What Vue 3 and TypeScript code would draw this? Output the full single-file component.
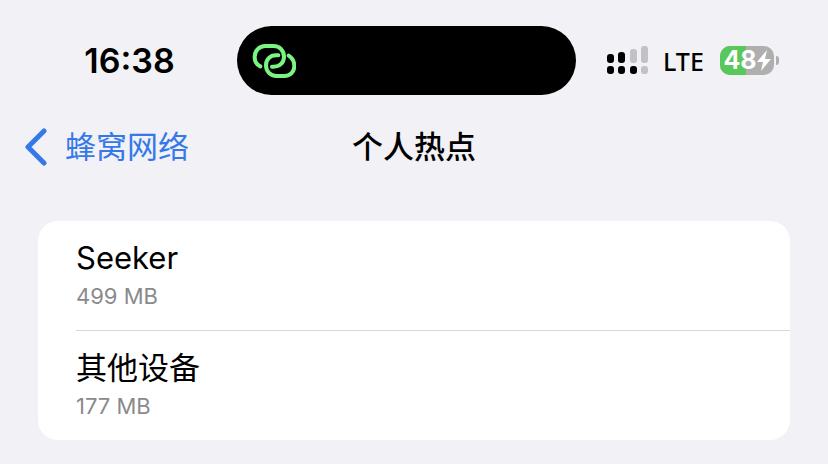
<script setup lang="ts">
interface Device {
  name: string
  usage: string
}

const time = '16:38'
const network = 'LTE'
const battery = 48
const devices: Device[] = [
  { name: 'Seeker', usage: '499 MB' },
  { name: '其他设备', usage: '177 MB' },
]
</script>

<template>
  <div class="screen">
    <div class="status">
      <time class="clock">{{ time }}</time>
      <div class="island">
        <svg class="link" viewBox="0 0 132 108" aria-hidden="true">
          <path d="M25 70C14 65 8 54 8 42C8 23 22 9 40 9H65C83 9 96 23 96 41C96 59 83 71 65 71H60" />
          <path d="M79 37H72C54 37 42 50 42 67C42 85 55 99 73 99H97C115 99 127 86 127 69C127 56 121 45 110 38" />
        </svg>
      </div>
      <div class="indicators">
        <svg class="signal" viewBox="0 1 42 29" aria-hidden="true">
          <rect x="0" y="9" width="7" height="9" rx="3" />
          <rect x="11" y="7" width="7" height="11" rx="3" />
          <rect class="off" x="23" y="4" width="7" height="14" rx="3" />
          <rect class="off" x="34" y="1" width="7" height="17" rx="3" />
          <rect x="0" y="21" width="7" height="8" rx="3" />
          <rect x="11" y="21" width="7" height="8" rx="3" />
          <rect x="23" y="21" width="7" height="8" rx="3" />
          <rect class="off" x="34" y="21" width="7" height="8" rx="3" />
        </svg>
        <span class="network">{{ network }}</span>
        <div class="battery">
          <div class="cell">
            <div class="charge" :style="{ width: battery + '%' }"></div>
            <div class="level">
              <span>{{ battery }}</span>
              <svg class="bolt" viewBox="0 0 14 21" aria-hidden="true">
                <path d="M10 0L0 12H6L4 21L14 9H8Z" />
              </svg>
            </div>
          </div>
          <div class="cap"></div>
        </div>
      </div>
    </div>

    <header class="nav">
      <a class="back" href="#">
        <svg class="chevron" viewBox="0 0 24 38" aria-hidden="true">
          <path d="M20 3L4 19L20 35" />
        </svg>
        <span>蜂窝网络</span>
      </a>
      <h1>个人热点</h1>
    </header>

    <main>
      <ul class="card">
        <li v-for="device in devices" :key="device.name" class="row">
          <span class="name">{{ device.name }}</span>
          <span class="usage">{{ device.usage }}</span>
        </li>
      </ul>
    </main>
  </div>
</template>

<style>
body {
  background: #f1f1f6;
}
</style>

<style scoped>
.screen {
  box-sizing: border-box;
  padding: 26px 0 24px;
  color: #000;
  font-family: Inter, "Noto Sans CJK SC", sans-serif;
}

.status {
  display: grid;
  grid-template-columns: 1fr 339px 1fr;
  align-items: center;
  padding-right: 15px;
}

.clock {
  padding-left: 22px;
  text-align: center;
  font-size: 34px;
  font-weight: 600;
  line-height: 40px;
}

.island {
  display: flex;
  align-items: center;
  height: 69px;
  padding-left: 15px;
  box-sizing: border-box;
  border-radius: 35px;
  background: #000;
}

.link {
  width: 44px;
  height: 36px;
  fill: none;
  stroke: #7bf581;
  stroke-width: 12;
  stroke-linecap: round;
}

.indicators {
  display: flex;
  align-items: center;
  padding-left: 31px;
}

.signal {
  flex: none;
  width: 42px;
  height: 29px;
}

.off {
  fill: #c2c2c5;
}

.network {
  width: 40px;
  margin-left: 14px;
  font-family: "Noto Sans", sans-serif;
  font-size: 25px;
  font-weight: 500;
  line-height: 36px;
}

.battery {
  display: flex;
  flex: none;
  align-items: center;
  gap: 2px;
  margin-left: 17px;
}

.cell {
  display: grid;
  width: 54px;
  height: 29px;
  overflow: hidden;
  border-radius: 10px;
  background: #afafb0;
}

.charge,
.level {
  grid-area: 1 / 1;
}

.charge {
  background: #5ac75b;
}

.level {
  display: flex;
  align-items: center;
  justify-content: center;
  color: #fff;
  font-size: 25px;
  font-weight: 700;
  line-height: 29px;
}

.bolt {
  width: 14px;
  height: 21px;
  fill: #fff;
}

.cap {
  width: 3px;
  height: 9px;
  border-radius: 0 3px 3px 0;
  background: #afafb0;
}

.nav {
  display: grid;
  grid-template-columns: 1fr auto 1fr;
  align-items: center;
  margin-top: 28px;
  padding: 0 24px;
}

.back {
  display: flex;
  align-items: center;
  gap: 17px;
  color: #3478e9;
  font-size: 31px;
  line-height: 48px;
  text-decoration: none;
}

.chevron {
  width: 24px;
  height: 38px;
  fill: none;
  stroke: currentColor;
  stroke-width: 5;
  stroke-linecap: round;
  stroke-linejoin: round;
}

h1 {
  margin: 0;
  font-size: 31px;
  font-weight: 500;
  line-height: 48px;
}

main {
  padding: 50px 38px 0;
}

.card {
  margin: 0;
  padding: 0 0 0 38px;
  border-radius: 20px;
  background: #fff;
  list-style: none;
}

.row {
  display: flex;
  flex-direction: column;
  padding: 16px 0 18px;
}

.row + .row {
  border-top: 1px solid #d8d8da;
}

.name {
  font-size: 31px;
  line-height: 42px;
}

.usage {
  padding-top: 1px;
  color: #8a8a8d;
  font-size: 22px;
  line-height: 32px;
}
</style>
